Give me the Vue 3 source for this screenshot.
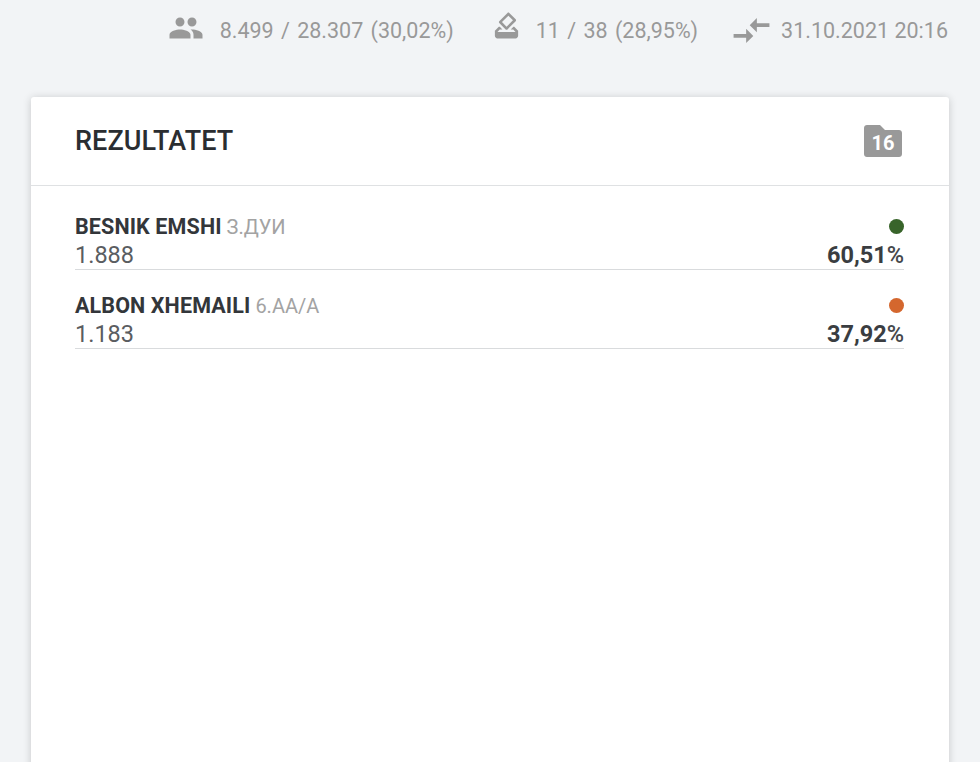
<template>
  <div class="page">
    <div class="stats">
      <div class="stat stat-people">
        <svg class="icon icon-people" viewBox="0 0 24 24"><path d="M16 11c1.66 0 2.99-1.34 2.99-3S17.66 5 16 5c-1.66 0-3 1.34-3 3s1.34 3 3 3zm-8 0c1.66 0 2.99-1.34 2.99-3S9.66 5 8 5C6.34 5 5 6.34 5 8s1.34 3 3 3zm0 2c-2.33 0-7 1.17-7 3.5V19h14v-2.5c0-2.33-4.67-3.5-7-3.5zm8 0c-.29 0-.62.02-.97.05 1.16.84 1.97 1.97 1.97 3.45V19h6v-2.5c0-2.33-4.67-3.5-7-3.5z"/></svg>
        <span>8.499 / 28.307 (30,02%)</span>
      </div>
      <div class="stat stat-vote">
        <svg class="icon icon-vote" viewBox="0 0 24 24"><path d="M18 13h-.68l-2 2h1.91L19 17H5l1.78-2h2.05l-2-2H6l-3 3v4c0 1.1.89 2 1.99 2H19c1.1 0 2-.89 2-2v-4l-3-3zm-1-5.05l-4.95 4.95-3.54-3.54 4.95-4.95L17 7.95zm-4.24-5.66L6.39 8.66c-.39.39-.39 1.02 0 1.41l4.95 4.95c.39.39 1.02.39 1.41 0l6.36-6.36c.39-.39.39-1.02 0-1.41L14.16 2.3c-.38-.4-1.01-.4-1.4-.01z"/></svg>
        <span>11 / 38 (28,95%)</span>
      </div>
      <div class="stat stat-time">
        <svg class="icon icon-arrows" viewBox="0 0 24 24"><path d="M9.01 14H2v2h7.01v3L13 15l-3.99-4v3zm5.98-1v-3H22V8h-7.01V5L11 9l3.99 4z"/></svg>
        <span>31.10.2021 20:16</span>
      </div>
    </div>

    <div class="card">
      <div class="card-head">
        <h2>REZULTATET</h2>
        <div class="folder">
          <svg viewBox="0 0 38 32"><path d="M3 0h13l5 5h14c1.7 0 3 1.300 3 3v21c0 1.700-1.300 3-3 3H3c-1.700 0-3-1.300-3-3V3c0-1.700 1.300-3 3-3z"/></svg>
          <span>16</span>
        </div>
      </div>
      <div class="rows">
        <div v-for="r in results" :key="r.name" class="row">
          <div class="line line-top">
            <div><b class="name">{{ r.name }}</b> <span class="party">{{ r.party }}</span></div>
            <i class="dot" :style="{ background: r.color }"></i>
          </div>
          <div class="line line-bottom">
            <span class="votes">{{ r.votes }}</span>
            <b class="pct">{{ r.pct }}<small>%</small></b>
          </div>
        </div>
      </div>
    </div>
  </div>
</template>

<script setup>
const results = [
  { name: 'BESNIK EMSHI', party: 'З.ДУИ', votes: '1.888', pct: '60,51', color: '#38642a' },
  { name: 'ALBON XHEMAILI', party: '6.АА/А', votes: '1.183', pct: '37,92', color: '#d4672e' }
]
</script>

<style>
html, body {
  margin: 0;
  background: #f2f4f6;
  overflow: hidden;
}
</style>

<style scoped>
.page {
  height: 762px;
  overflow: hidden;
  padding: 0 31px;
  box-sizing: border-box;
  font-family: Roboto, "Liberation Sans", sans-serif;
}

.stats {
  height: 97px;
  box-sizing: border-box;
  padding: 15px 1px 0 0;
  display: flex;
  justify-content: flex-end;
  color: #999;
  font-size: 21.5px;
  line-height: 32px;
}

.stat {
  display: flex;
  align-items: flex-start;
  word-spacing: 2px;
}

.stat-vote {
  margin-left: 37px;
}

.stat-time {
  margin-left: 32px;
  word-spacing: 0;
}

.stat span {
  display: block;
}

.icon {
  fill: #999;
  flex: none;
}

.icon-people {
  width: 36px;
  height: 36px;
  margin-top: -5px;
  margin-right: 16px;
}

.icon-vote {
  width: 31px;
  height: 31px;
  margin-top: -5px;
  margin-right: 14px;
}

.icon-arrows {
  width: 43px;
  height: 43px;
  margin-top: -6px;
  margin-right: 8px;
}

.card {
  background: #fff;
  width: 918px;
  height: 700px;
  border-radius: 3px;
  box-shadow: 0 1px 8px rgba(0, 0, 0, 0.18);
}

.card-head {
  height: 89px;
  box-sizing: border-box;
  border-bottom: 1px solid #dfe1e3;
  padding: 0 47px 0 44px;
  display: flex;
  align-items: center;
  justify-content: space-between;
}

h2 {
  margin: 0;
  font-size: 27px;
  font-weight: 500;
  letter-spacing: 0.1px;
  color: #2a2d31;
}

.folder {
  position: relative;
  width: 38px;
  height: 32px;
}

.folder svg {
  display: block;
  width: 38px;
  height: 32px;
  fill: #999;
}

.folder span {
  position: absolute;
  left: 0;
  right: 0;
  top: 5px;
  text-align: center;
  color: #fff;
  font-size: 20px;
  font-weight: 700;
  line-height: 26px;
}

.rows {
  padding: 27px 45px 0 44px;
}

.row {
  border-bottom: 1px solid #d9dbdd;
  height: 57px;
  box-sizing: border-box;
  margin-bottom: 22px;
}

.line {
  display: flex;
  justify-content: space-between;
  align-items: center;
}

.line-top {
  height: 27px;
}

.line-bottom {
  height: 29px;
}

.name {
  font-size: 21.5px;
  font-weight: 700;
  letter-spacing: 0.12px;
  color: #33363a;
}

.party {
  font-size: 20px;
  color: #a3a3a3;
  margin-left: 1px;
}

.dot {
  width: 15px;
  height: 15px;
  border-radius: 50%;
}

.votes {
  font-size: 23.5px;
  color: #5a5d61;
}

.pct {
  font-size: 23.5px;
  font-weight: 700;
  color: #3a3d41;
}

.pct small {
  font-size: 23.5px;
  font-weight: 500;
  color: #45484c;
}
</style>
